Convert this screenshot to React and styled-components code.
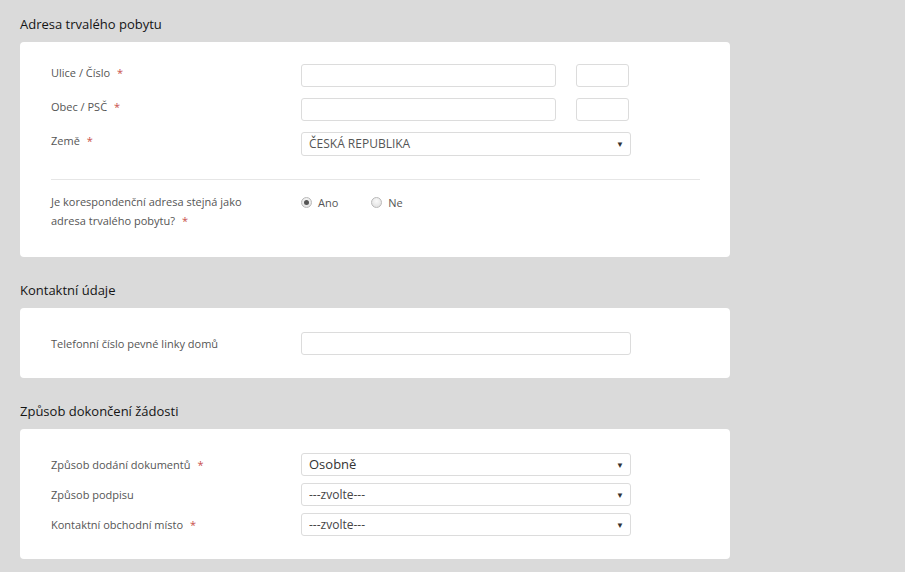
import React from "react";
import styled, { createGlobalStyle } from "styled-components";

const Global = createGlobalStyle`
  html, body { margin: 0; padding: 0; }
  body {
    background-color: #dadada;
    font-family: "Open Sans", "Noto Sans", Arial, sans-serif;
    width: 905px;
    height: 572px;
    overflow: hidden;
  }
`;

const Page = styled.div`
  width: 710px;
  padding: 14px 0 0 20px;
  display: flex;
  flex-direction: column;
`;

const SectionTitle = styled.h2`
  margin: ${(p) => (p.$first ? "0" : "23px")} 0 8px 0;
  font-size: 13px;
  line-height: 20px;
  font-weight: 400;
  color: #151515;
`;

const Card = styled.div`
  background: #fff;
  border-radius: 4px;
  padding: ${(p) => p.$pad};
  display: flex;
  flex-direction: column;
  gap: ${(p) => p.$gap || "0"};
`;

const Row = styled.div`
  display: flex;
  align-items: ${(p) => p.$align || "center"};
  margin-top: ${(p) => p.$mt || "0"};
`;

const Label = styled.div`
  width: 250px;
  flex: 0 0 250px;
  box-sizing: border-box;
  padding-right: 35px;
  font-size: 11px;
  line-height: ${(p) => p.$lh || "17px"};
  color: #555;
`;

const Star = styled.span`
  color: #c9504c;
  margin-left: 7px;
`;

const Inputs = styled.div`
  display: flex;
  gap: 20px;
`;

const TextInput = styled.input`
  box-sizing: border-box;
  width: ${(p) => p.$w}px;
  height: 23px;
  border: 1px solid #dcdcdc;
  border-radius: 3px;
  background: #fff;
  padding: 0 6px;
  font-family: inherit;
  font-size: 12px;
  outline: none;
  margin: 0;
`;

const SelectBox = styled.div`
  box-sizing: border-box;
  width: 330px;
  height: ${(p) => p.$h || 23}px;
  border: 1px solid #dcdcdc;
  border-radius: 3px;
  background: #fff;
  display: flex;
  align-items: center;
  justify-content: space-between;
  padding: 0 6px 0 7px;
`;

const SelectValue = styled.span`
  font-size: ${(p) => p.$size || 12}px;
  color: ${(p) => p.$color || "#444"};
  line-height: 1;
`;

const Arrow = styled.span`
  font-size: 8px;
  color: #333;
  line-height: 1;
`;

const Divider = styled.div`
  height: 1px;
  background: #e6e6e6;
  margin: ${(p) => p.$m};
`;

const Radios = styled.div`
  display: flex;
  align-items: center;
  gap: 33px;
  height: 17px;
  margin-top: 2px;
`;

const RadioItem = styled.label`
  display: flex;
  align-items: center;
  gap: 6px;
  font-size: 11px;
  color: #555;
`;

const RadioCircle = styled.span`
  box-sizing: border-box;
  width: 11px;
  height: 11px;
  border-radius: 50%;
  border: 1px solid #b9b9b9;
  background: radial-gradient(circle at 50% 35%, #fafafa, #dcdcdc);
  display: flex;
  align-items: center;
  justify-content: center;
  &::after {
    content: "";
    width: 5px;
    height: 5px;
    border-radius: 50%;
    background: ${(p) => (p.$checked ? "#555" : "transparent")};
  }
`;

function Select({ value, size, color, h }) {
  return (
    <SelectBox $h={h}>
      <SelectValue $size={size} $color={color}>{value}</SelectValue>
      <Arrow>▼</Arrow>
    </SelectBox>
  );
}

export default function App() {
  return (
    <>
      <Global />
      <Page>
        <SectionTitle $first>Adresa trvalého pobytu</SectionTitle>
        <Card $pad="22px 30px 27px 31px">
          <Row $align="flex-start">
            <Label>Ulice / Číslo<Star>*</Star></Label>
            <Inputs>
              <TextInput $w={255} />
              <TextInput $w={53} />
            </Inputs>
          </Row>
          <Row $align="flex-start" $mt="11px">
            <Label>Obec / PSČ<Star>*</Star></Label>
            <Inputs>
              <TextInput $w={255} />
              <TextInput $w={53} />
            </Inputs>
          </Row>
          <Row $align="flex-start" $mt="11px">
            <Label>Země<Star>*</Star></Label>
            <Select value="ČESKÁ REPUBLIKA" size={12} color="#555" h={24} />
          </Row>
          <Divider $m="23px 0 12px 0" />
          <Row $align="flex-start">
            <Label $lh="19px">
              Je korespondenční adresa stejná jako adresa trvalého pobytu?<Star>*</Star>
            </Label>
            <Radios>
              <RadioItem><RadioCircle $checked />Ano</RadioItem>
              <RadioItem><RadioCircle />Ne</RadioItem>
            </Radios>
          </Row>
        </Card>

        <SectionTitle>Kontaktní údaje</SectionTitle>
        <Card $pad="24px 30px 23px 31px">
          <Row>
            <Label>Telefonní číslo pevné linky domů</Label>
            <TextInput $w={330} />
          </Row>
        </Card>

        <SectionTitle>Způsob dokončení žádosti</SectionTitle>
        <Card $pad="24px 30px 23px 31px" $gap="7px">
          <Row>
            <Label>Způsob dodání dokumentů<Star>*</Star></Label>
            <Select value="Osobně" size={13} color="#333" />
          </Row>
          <Row>
            <Label>Způsob podpisu</Label>
            <Select value="---zvolte---" size={12} color="#444" />
          </Row>
          <Row>
            <Label>Kontaktní obchodní místo<Star>*</Star></Label>
            <Select value="---zvolte---" size={12} color="#444" />
          </Row>
        </Card>
      </Page>
    </>
  );
}
